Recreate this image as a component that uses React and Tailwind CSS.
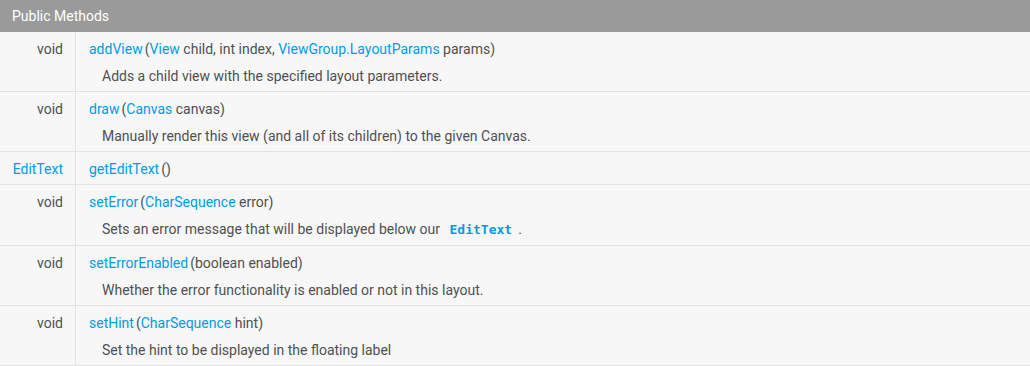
import React from 'react'

const methods = [
  {
    type: 'void',
    name: 'addView',
    params: [
      { link: 'View', text: ' child, int index, ' },
      { link: 'ViewGroup.LayoutParams', text: ' params' },
    ],
    desc: 'Adds a child view with the specified layout parameters.',
  },
  {
    type: 'void',
    name: 'draw',
    params: [{ link: 'Canvas', text: ' canvas' }],
    desc: 'Manually render this view (and all of its children) to the given Canvas.',
  },
  { type: 'EditText', typeLink: true, name: 'getEditText', params: [] },
  {
    type: 'void',
    name: 'setError',
    params: [{ link: 'CharSequence', text: ' error' }],
    desc: (
      <>
        Sets an error message that will be displayed below our{' '}
        <code className="px-[6px] font-['DejaVu_Sans_Mono',monospace] text-[13px] font-bold text-[#039be5]">EditText</code>.
      </>
    ),
  },
  {
    type: 'void',
    name: 'setErrorEnabled',
    params: [{ text: 'boolean enabled' }],
    desc: 'Whether the error functionality is enabled or not in this layout.',
  },
  {
    type: 'void',
    name: 'setHint',
    params: [{ link: 'CharSequence', text: ' hint' }],
    desc: 'Set the hint to be displayed in the floating label',
  },
]

const Link = ({ children }) => <span className="text-[#039be5]">{children}</span>

const App = () => {
  return (
    <div className="w-[1030px] h-[366px] bg-[#f7f7f7] font-['Roboto',sans-serif] text-[14px] text-[#505050]">
      {/* Table header */}
      <div className="h-[32px] bg-[#9a9a9a] px-[12px] flex items-center text-white text-[14px]">
        Public Methods
      </div>

      {methods.map((m) => (
        <div key={m.name} className="flex border-b border-[#e2e2e2]">
          <div className="w-[76px] shrink-0 border-r border-[#e2e2e2] pr-[12px] pt-[5px] text-right leading-[24px]">
            {m.typeLink ? <Link>{m.type}</Link> : m.type}
          </div>
          <div className="flex-1 pl-[13px] pt-[5px] pb-[3px] leading-[24px]">
            <div>
              <Link>{m.name}</Link>
              <span className="ml-[2px]">(</span>
              {m.params.map((p, i) => (
                <span key={i}>
                  {p.link && <Link>{p.link}</Link>}
                  {p.text}
                </span>
              ))}
              <span>)</span>
            </div>
            {m.desc && <div className="mt-[3px] pl-[13px]">{m.desc}</div>}
          </div>
        </div>
      ))}
    </div>
  )
}

export default App
